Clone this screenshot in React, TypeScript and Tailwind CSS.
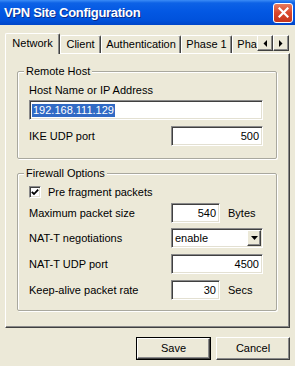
import React from "react";

const font = { fontFamily: '"Liberation Sans", Arial, sans-serif' };

const sunken =
  "bg-white border border-t-[#8a8a8a] border-l-[#8a8a8a] border-r-white border-b-white shadow-[inset_1px_1px_0_#404040,inset_-1px_-1px_0_#e3e0d2]";

const raised =
  "bg-[#ece9d8] border border-t-white border-l-white border-r-[#404040] border-b-[#404040] shadow-[inset_-1px_-1px_0_#8a8a8a]";

function Field({ value, w, align = "right" }: { value: string; w: string; align?: "right" | "left" }) {
  return (
    <div className={`${sunken} ${w} h-[20px] flex items-center ${align === "right" ? "justify-end pr-[3px]" : "justify-start pl-[3px]"}`}>
      <span className="text-[11px] leading-[13px] text-black">{value}</span>
    </div>
  );
}

function Group({ title, children }: { title: string; children: React.ReactNode }) {
  return (
    <fieldset className="border border-[#a9a89e] rounded-[2px] shadow-[inset_1px_1px_0_#ffffff,1px_1px_0_#ffffff] w-[260px]">
      <legend className="ml-[6px] px-[2px] bg-[#ece9d8] text-[11px] leading-[13px] text-black">{title}</legend>
      {children}
    </fieldset>
  );
}

function Row({ label, children }: { label: string; children: React.ReactNode }) {
  return (
    <div className="flex items-center">
      <div className="w-[142px] text-[11px] leading-[13px] text-black">{label}</div>
      {children}
    </div>
  );
}

function Tab({ label, w, selected }: { label: string; w: string; selected?: boolean }) {
  if (selected) {
    return (
      <div className={`${w} h-[21px] shrink-0 bg-[#ece9d8] border-t border-l border-t-white border-l-white border-r border-r-[#404040] shadow-[inset_-1px_0_0_#8a8a8a] rounded-t-[2px] flex items-center justify-center pb-[1px]`}>
        <span className="text-[11px] leading-[13px] text-black">{label}</span>
      </div>
    );
  }
  return (
    <div className={`${w} h-[18px] mb-[1px] shrink-0 bg-[#ece9d8] border-t border-l border-t-white border-l-white border-r border-r-[#404040] shadow-[inset_-1px_0_0_#8a8a8a] rounded-t-[2px] flex items-center justify-center`}>
      <span className="text-[11px] leading-[13px] text-black whitespace-nowrap">{label}</span>
    </div>
  );
}

function Arrow({ dir }: { dir: "left" | "right" }) {
  return (
    <div className={`${raised} w-[16px] h-[16px] flex items-center justify-center`}>
      <svg width="4" height="7" viewBox="0 0 4 7">
        {dir === "left" ? <polygon points="4,0 4,7 0.5,3.5" fill="#000" /> : <polygon points="0,0 0,7 3.5,3.5" fill="#000" />}
      </svg>
    </div>
  );
}

export default function App() {
  return (
    <div className="w-[295px] h-[366px] bg-[#ece9d8] flex flex-col overflow-hidden" style={font}>
      {/* Title bar */}
      <div className="h-[25px] shrink-0 flex items-center justify-between pl-[4px] pr-[2px] bg-[linear-gradient(180deg,#3b8cf6_0%,#0d62e6_12%,#0358e3_45%,#0052dc_80%,#0045c8_100%)]">
        <span className="text-white font-bold text-[13px] tracking-[-0.3px] [text-shadow:1px_1px_0_#0a2a8a]">VPN Site Configuration</span>
        <div className="w-[20px] h-[20px] rounded-[3px] border border-white bg-[linear-gradient(180deg,#e87b5e_0%,#d9462a_50%,#c4351c_100%)] flex items-center justify-center">
          <svg width="11" height="11" viewBox="0 0 11 11">
            <path d="M1.5 1.5 L9.5 9.5 M9.5 1.5 L1.5 9.5" stroke="#fff" strokeWidth="2.2" strokeLinecap="square" />
          </svg>
        </div>
      </div>

      {/* Tabs */}
      <div className="mt-[8px] ml-[5px] flex items-start">
        <div className="w-[252px] h-[21px] -mb-px relative z-10 flex items-end overflow-hidden">
          <Tab label="Network" w="w-[55px]" selected />
          <Tab label="Client" w="w-[41px]" />
          <Tab label="Authentication" w="w-[80px]" />
          <Tab label="Phase 1" w="w-[51px]" />
          <Tab label="Phase 2" w="w-[51px]" />
        </div>
        <div className="flex mt-[2px]">
          <Arrow dir="left" />
          <Arrow dir="right" />
        </div>
      </div>

      {/* Panel */}
      <div className="ml-[5px] w-[285px] h-[275px] shrink-0 border border-t-white border-l-white border-r-[#404040] border-b-[#404040] shadow-[inset_-1px_-1px_0_#8a8a8a] pl-[11px] pt-[11px]">
        <Group title="Remote Host">
          <div className="pl-[11px] pr-[13px] pt-[6px] pb-[12px]">
            <div className="text-[11px] leading-[13px] text-black">Host Name or IP Address</div>
            <div className={`${sunken} mt-[3px] w-[234px] h-[20px] flex items-center pl-[2px]`}>
              <span className="bg-[#316ac5] text-white text-[11px] leading-[13px] px-[1px]">192.168.111.129</span>
            </div>
            <div className="mt-[6px]">
              <Row label="IKE UDP port">
                <Field value="500" w="w-[92px]" />
              </Row>
            </div>
          </div>
        </Group>

        <div className="mt-[8px]">
          <Group title="Firewall Options">
            <div className="pl-[11px] pr-[13px] pt-[6px] pb-[10px]">
              <div className="flex items-center h-[12px]">
                <div className={`${sunken} w-[12px] h-[12px] flex items-center justify-center`}>
                  <svg width="8" height="8" viewBox="0 0 8 8">
                    <path d="M0.8 3.8 L3 6 L7.2 1.6" stroke="#000" strokeWidth="1.8" fill="none" />
                  </svg>
                </div>
                <span className="ml-[7px] text-[11px] leading-[13px] text-black">Pre fragment packets</span>
              </div>
              <div className="mt-[5px]">
                <Row label="Maximum packet size">
                  <Field value="540" w="w-[49px]" />
                  <span className="ml-[8px] text-[11px] leading-[13px] text-black">Bytes</span>
                </Row>
              </div>
              <div className="mt-[5px]">
                <Row label="NAT-T negotiations">
                  <div className={`${sunken} w-[92px] h-[20px] flex items-center justify-between pl-[3px] pr-[1px]`}>
                    <span className="text-[11px] leading-[13px] text-black">enable</span>
                    <div className={`${raised} w-[14px] h-[16px] flex items-center justify-center`}>
                      <svg width="7" height="4" viewBox="0 0 7 4">
                        <polygon points="0,0 7,0 3.5,4" fill="#000" />
                      </svg>
                    </div>
                  </div>
                </Row>
              </div>
              <div className="mt-[6px]">
                <Row label="NAT-T UDP port">
                  <Field value="4500" w="w-[92px]" />
                </Row>
              </div>
              <div className="mt-[6px]">
                <Row label="Keep-alive packet rate">
                  <Field value="30" w="w-[49px]" />
                  <span className="ml-[8px] text-[11px] leading-[13px] text-black">Secs</span>
                </Row>
              </div>
            </div>
          </Group>
        </div>
      </div>

      {/* Buttons */}
      <div className="mt-[9px] flex justify-end gap-[5px] pr-[5px]">
        <div className="w-[75px] h-[23px] border border-black">
          <div className={`${raised} w-full h-full flex items-center justify-center`}>
            <span className="text-[11px] leading-[13px] text-black">Save</span>
          </div>
        </div>
        <div className={`${raised} w-[74px] h-[23px] flex items-center justify-center`}>
          <span className="text-[11px] leading-[13px] text-black">Cancel</span>
        </div>
      </div>
    </div>
  );
}
